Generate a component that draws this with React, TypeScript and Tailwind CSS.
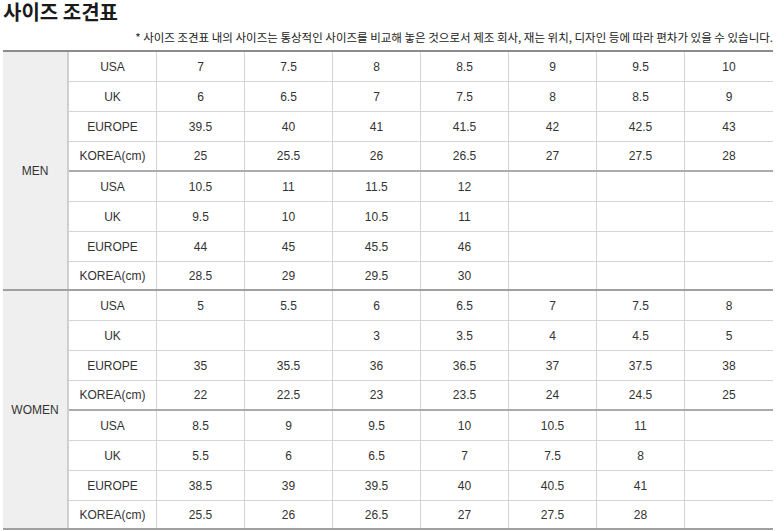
import React from "react";

type Row = { label: string; values: string[] };
type Section = { name: string; sets: Row[][] };

const sections: Section[] = [
    {
        name: "MEN",
        sets: [
            [
                { label: "USA", values: ["7", "7.5", "8", "8.5", "9", "9.5", "10"] },
                { label: "UK", values: ["6", "6.5", "7", "7.5", "8", "8.5", "9"] },
                { label: "EUROPE", values: ["39.5", "40", "41", "41.5", "42", "42.5", "43"] },
                { label: "KOREA(cm)", values: ["25", "25.5", "26", "26.5", "27", "27.5", "28"] },
            ],
            [
                { label: "USA", values: ["10.5", "11", "11.5", "12", "", "", ""] },
                { label: "UK", values: ["9.5", "10", "10.5", "11", "", "", ""] },
                { label: "EUROPE", values: ["44", "45", "45.5", "46", "", "", ""] },
                { label: "KOREA(cm)", values: ["28.5", "29", "29.5", "30", "", "", ""] },
            ],
        ],
    },
    {
        name: "WOMEN",
        sets: [
            [
                { label: "USA", values: ["5", "5.5", "6", "6.5", "7", "7.5", "8"] },
                { label: "UK", values: ["", "", "3", "3.5", "4", "4.5", "5"] },
                { label: "EUROPE", values: ["35", "35.5", "36", "36.5", "37", "37.5", "38"] },
                { label: "KOREA(cm)", values: ["22", "22.5", "23", "23.5", "24", "24.5", "25"] },
            ],
            [
                { label: "USA", values: ["8.5", "9", "9.5", "10", "10.5", "11", ""] },
                { label: "UK", values: ["5.5", "6", "6.5", "7", "7.5", "8", ""] },
                { label: "EUROPE", values: ["38.5", "39", "39.5", "40", "40.5", "41", ""] },
                { label: "KOREA(cm)", values: ["25.5", "26", "26.5", "27", "27.5", "28", ""] },
            ],
        ],
    },
];

const SizeRow = ({ row, kind }: { row: Row; kind: "normal" | "setEnd" | "last" }) => {
    const rowClass =
        kind === "normal"
            ? "h-[30px] border-b border-[#d4d4d4]"
            : kind === "setEnd"
            ? "h-[30px] border-b-2 border-[#ababab]"
            : "h-[27px]";
    return (
        <div className={`flex ${rowClass}`}>
            <div className="w-[88px] flex items-center justify-center border-r border-[#d4d4d4]">{row.label}</div>
            {row.values.map((v, i) => (
                <div
                    key={i}
                    className={`w-[88px] flex items-center justify-center ${i < 6 ? "border-r border-[#d4d4d4]" : ""}`}
                >
                    {v}
                </div>
            ))}
        </div>
    );
};

export default function App() {
    return (
        <div className="w-[784px] h-[531px] bg-white text-[#333]" style={{ fontFamily: '"Liberation Sans", "Noto Sans CJK KR", sans-serif' }}>
            <h1
                className="pt-[1px] pl-[3px] h-[22px] text-[20px] leading-[21px] font-bold text-[#1a1a1a]"
                style={{ fontFamily: '"Noto Sans CJK KR", sans-serif' }}
            >
                사이즈 조견표
            </h1>
            <div
                className="h-[28px] flex items-center justify-end pr-[11px] pt-[4px] text-[11.5px] leading-none text-[#222]"
                style={{ fontFamily: '"Noto Sans CJK KR", sans-serif' }}
            >
                * 사이즈 조견표 내의 사이즈는 통상적인 사이즈를 비교해 놓은 것으로서 제조 회사, 재는 위치, 디자인 등에 따라 편차가 있을 수 있습니다.
            </div>

            {/* size table */}
            <div className="ml-[3px] w-[770px] border-t-2 border-[#8c8c8c] text-[12px]">
                {sections.map((sec) => (
                    <div key={sec.name} className="flex border-b-2 border-[#a0a0a0]">
                        <div className="w-[66px] bg-[#efefef] border-r-2 border-[#cfcfcf] flex items-center justify-center">
                            {sec.name}
                        </div>
                        <div className="flex flex-col">
                            {sec.sets.map((set, si) =>
                                set.map((row, ri) => {
                                    const isLastRow = ri === set.length - 1;
                                    const kind = !isLastRow ? "normal" : si === sec.sets.length - 1 ? "last" : "setEnd";
                                    return <SizeRow key={`${si}-${ri}`} row={row} kind={kind} />;
                                })
                            )}
                        </div>
                    </div>
                ))}
            </div>
        </div>
    );
}
